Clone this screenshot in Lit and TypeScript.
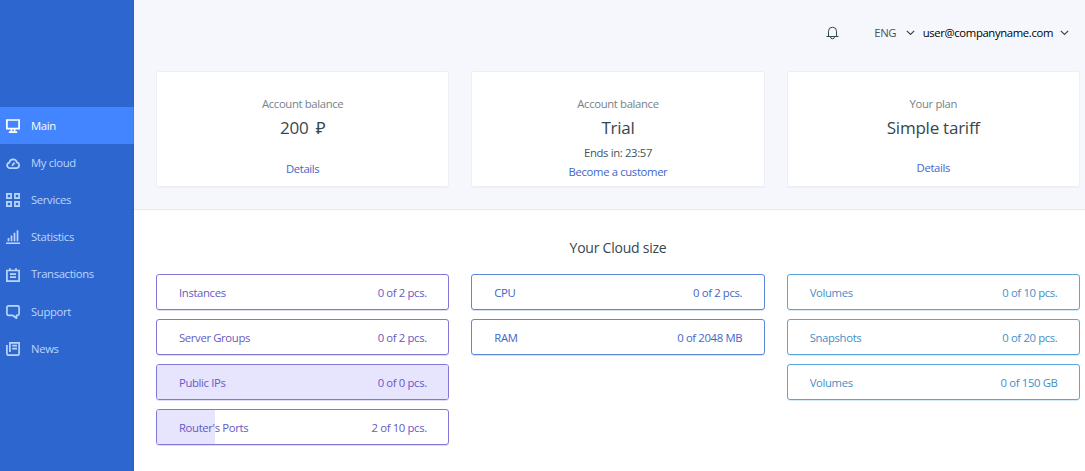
import { LitElement, html, css, svg, nothing } from "lit";
import { customElement, property } from "lit/decorators.js";
import { styleMap } from "lit/directives/style-map.js";

const icons: Record<string, unknown> = {
  main: svg`<path d="M.9 1h12.2v8.6H.9z"/><path d="M5.4 10v3M8.6 10v3M2.8 13.2h8.4" />`,
  cloud: svg`<path d="M3.6 12.1a2.8 2.8 0 0 1-.3-5.5A3.9 3.9 0 0 1 10.9 6.4a2.9 2.9 0 0 1-.2 5.7z"/><path d="M6 9.7 8.6 6.6"/>`,
  services: svg`<path d="M.9.9h4.2v4.2H.9zM8.9.9h4.2v4.2H8.9zM.9 8.9h4.2v4.2H.9zM8.9 8.9h4.2v4.2H8.9z"/>`,
  statistics: svg`<path d="M0 13.3h14M2.5 7.9v3.4M5.5 5.4v5.9M8.5 2.8v8.5M11.5 .3v11"/>`,
  transactions: svg`<path d="M.9 2.5h12.2v10.6H.9zM4 .2v2.3M10 .2v2.3M4 6.1h6M4 9.1h6"/>`,
  support: svg`<path d="M2.5.9h9a1.6 1.6 0 0 1 1.6 1.6v6.2a1.6 1.6 0 0 1-1.6 1.6h-1v2.9L6.6 10.3H2.5A1.6 1.6 0 0 1 .9 8.7V2.5A1.6 1.6 0 0 1 2.5.9z" stroke-linejoin="round"/>`,
  news: svg`<path d="M3.9 10V.9h9.2v10.6a1.7 1.7 0 0 1-1.7 1.7H2.6a1.7 1.7 0 0 1-1.7-1.7V3M6.2 3.7h4.8M6.2 6.6h4.8"/>`,
};

const chevron = html`<svg class="chevron" viewBox="0 0 9 6" width="9" height="6"><path d="M.8.8 4.5 4.5 8.2.8" /></svg>`;

@customElement("quota-bar")
export class QuotaBar extends LitElement {
  @property() label = "";
  @property() amount = "";
  @property({ type: Number }) fill = 0;

  static styles = css`
    :host {
      display: grid;
      box-sizing: border-box;
      height: 36px;
      border: 1px solid var(--edge);
      border-radius: 3px;
      color: var(--ink);
      box-shadow: 0 1px 0 -0.2px var(--soft);
      overflow: hidden;
    }
    .fill, .row { grid-area: 1 / 1; }
    .fill { background: #e7e4fe; }
    .row {
      display: flex;
      align-items: center;
      justify-content: space-between;
      padding: 2px 21.5px 0 22px;
      white-space: nowrap;
    }
  `;

  render() {
    return html`
      ${this.fill ? html`<div class="fill" style=${styleMap({ width: `${this.fill}%` })}></div>` : nothing}
      <div class="row"><span>${this.label}</span><span>${this.amount}</span></div>
    `;
  }
}

@customElement("app-root")
export class AppRoot extends LitElement {
  static styles = css`
    :host {
      display: flex;
      height: 471px;
      overflow: hidden;
      background: #fff;
      color: #36474f;
      font: 11.3px/16px "Open Sans", "Noto Sans", sans-serif;
      letter-spacing: -0.35px;
    }
    svg { display: block; fill: none; stroke: currentColor; }
    .sidebar {
      box-sizing: border-box;
      flex: 0 0 134px;
      padding-top: 107px;
      background: #2e66cf;
      box-shadow: inset -1px 0 0 #2c60c4;
    }
    .item {
      display: flex;
      align-items: center;
      gap: 11px;
      height: 37.1px;
      padding-left: 6px;
      color: #b9d6ff;
    }
    .item svg { stroke-width: 1.7; margin-top: 1.2px; }
    .item.active { background: #4385ff; color: #fff; box-shadow: inset -1px 0 0 #3f7ef2; }
    .item span { padding-top: 1px; }
    .content { flex: 1; min-width: 0; }
    .top {
      box-sizing: border-box;
      height: 210px;
      background: #f6f7fc;
      border-bottom: 1px solid #e6e8ec;
    }
    .header {
      display: flex;
      align-items: center;
      justify-content: flex-end;
      height: 71px;
      box-sizing: border-box;
      padding: 0 16px 6px 0;
    }
    .bell { margin-right: 35.5px; color: #36474f; }
    .lang { margin-right: 9.5px; color: #44535c; }
    .user { margin: 0 7px 0 8px; color: #000; letter-spacing: -0.36px; }
    .chevron { stroke: #37474f; stroke-width: 1.2; }
    .grid {
      display: grid;
      grid-template-columns: repeat(3, 1fr);
      gap: 22px;
      padding: 0 5px 0 22px;
    }
    .card {
      display: flex;
      flex-direction: column;
      align-items: center;
      box-sizing: border-box;
      height: 116px;
      padding-top: 25px;
      background: #fff;
      border-radius: 2px;
      box-shadow: inset 0 0 0 1px #eeeff4, 0 1px 0 #eeeff4;
    }
    .caption { color: #75828a; }
    .value { margin-top: 4px; font-size: 17px; line-height: 24px; letter-spacing: -0.24px; white-space: pre; }
    .currency { margin-left: 3px; }
    .note { margin-top: 5px; color: #44535c; }
    .link { color: #3f66c8; }
    .with-note { margin-top: 3px; }
    .low { margin-top: 21px; }
    .high { margin-top: 20px; }
    .heading { margin-top: 28px; text-align: center; font-size: 14px; line-height: 20px; letter-spacing: -0.24px; padding-left: 17px; }
    .quotas { padding-top: 16px; align-items: start; }
    .column { display: grid; gap: 9px; }
    .violet { --edge: #8177d6; --soft: #d5d1f5; --ink: #6559c4; }
    .blue { --edge: #5c88da; --soft: #cbd9f4; --ink: #3f66c8; }
    .cyan { --edge: #5aa5d9; --soft: #cbe3f4; --ink: #428fca; }
  `;

  private item(icon: string, label: string, active = false) {
    return html`<div class="item ${active ? "active" : ""}">
      <svg width="14" height="14" viewBox="0 0 14 14">${icons[icon]}</svg><span>${label}</span>
    </div>`;
  }

  render() {
    return html`
      <nav class="sidebar">
        ${this.item("main", "Main", true)}
        ${this.item("cloud", "My cloud")}
        ${this.item("services", "Services")}
        ${this.item("statistics", "Statistics")}
        ${this.item("transactions", "Transactions")}
        ${this.item("support", "Support")}
        ${this.item("news", "News")}
      </nav>
      <main class="content">
        <section class="top">
          <header class="header">
            <svg class="bell" width="13" height="14" viewBox="0 0 13 14">
              <path d="M.5 10.5h12M2.5 10.4V5.2a4 4 0 0 1 8 0v5.2M4.5 10.8a2 2 0 0 0 4 0" />
            </svg>
            <span class="lang">ENG</span>${chevron}
            <span class="user">user@companyname.com</span>${chevron}
          </header>
          <div class="grid">
            <div class="card">
              <div class="caption">Account balance</div>
              <div class="value">200 <span class="currency">₽</span></div>
              <div class="link low">Details</div>
            </div>
            <div class="card">
              <div class="caption">Account balance</div>
              <div class="value">Trial</div>
              <div class="note">Ends in: 23:57</div>
              <div class="link with-note">Become a customer</div>
            </div>
            <div class="card">
              <div class="caption">Your plan</div>
              <div class="value">Simple tariff</div>
              <div class="link high">Details</div>
            </div>
          </div>
        </section>
        <div class="heading">Your Cloud size</div>
        <section class="grid quotas">
          <div class="column violet">
            <quota-bar label="Instances" amount="0 of 2 pcs."></quota-bar>
            <quota-bar label="Server Groups" amount="0 of 2 pcs."></quota-bar>
            <quota-bar label="Public IPs" amount="0 of 0 pcs." fill="100"></quota-bar>
            <quota-bar label="Router's Ports" amount="2 of 10 pcs." fill="20"></quota-bar>
          </div>
          <div class="column blue">
            <quota-bar label="CPU" amount="0 of 2 pcs."></quota-bar>
            <quota-bar label="RAM" amount="0 of 2048 MB"></quota-bar>
          </div>
          <div class="column cyan">
            <quota-bar label="Volumes" amount="0 of 10 pcs."></quota-bar>
            <quota-bar label="Snapshots" amount="0 of 20 pcs."></quota-bar>
            <quota-bar label="Volumes" amount="0 of 150 GB"></quota-bar>
          </div>
        </section>
      </main>
    `;
  }
}
